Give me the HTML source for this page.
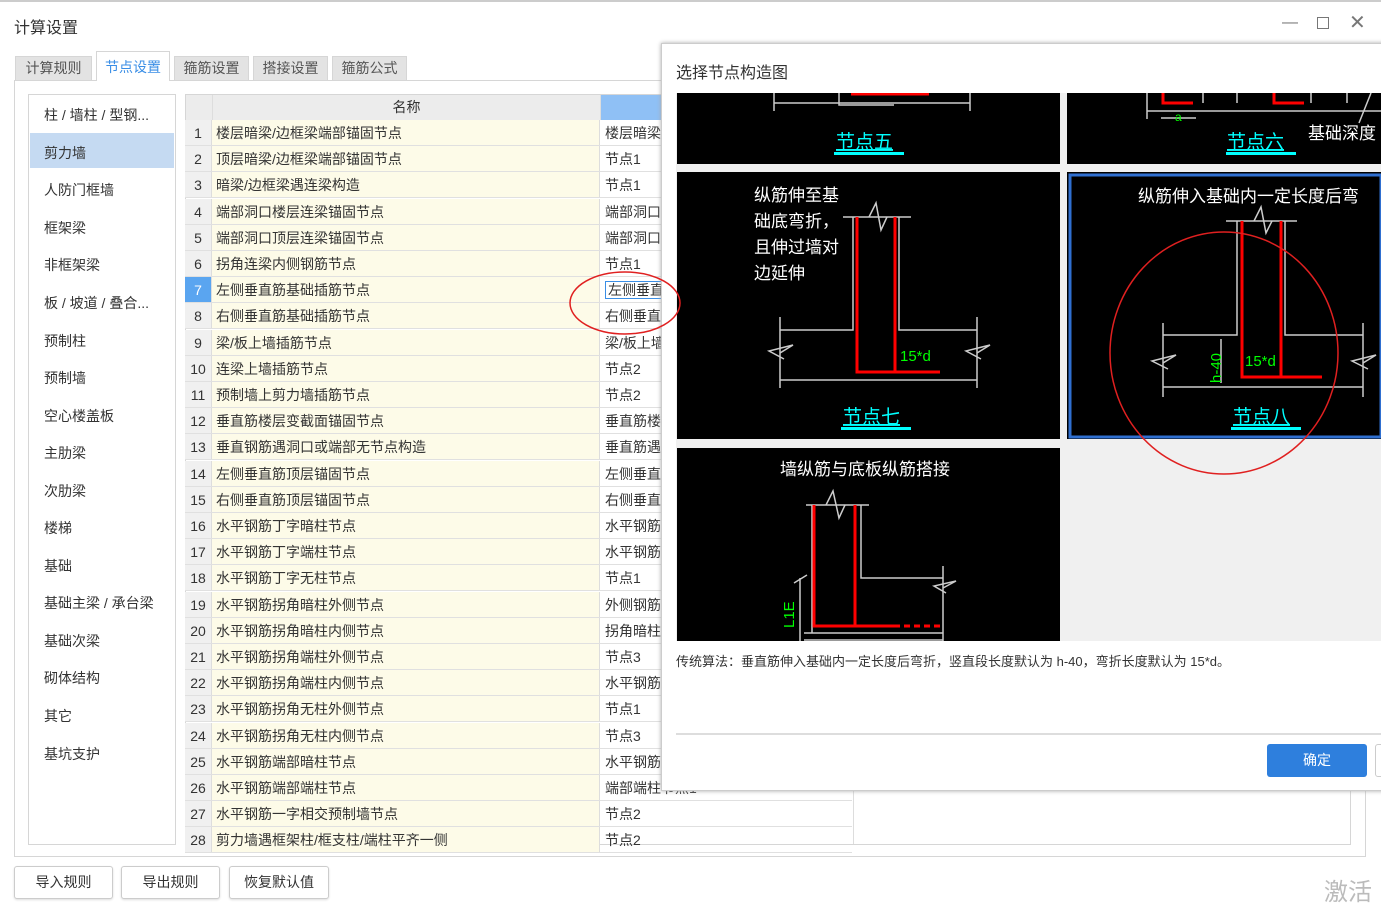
<!DOCTYPE html>
<html><head><meta charset="utf-8"><style>
*{margin:0;padding:0;box-sizing:border-box}
body{width:1381px;height:913px;position:relative;overflow:hidden;background:#fff;font-family:"Liberation Sans","Noto Sans CJK SC",sans-serif;color:#333;font-size:14px}
.a{position:absolute}
.tab{position:absolute;top:56px;height:24px;background:#e3e3e3;border:1px solid #d6d6d6;border-bottom:none;font-size:14px;color:#555;text-align:center;line-height:23px}
.li{position:absolute;left:44px;font-size:14px;color:#333}
.row{position:absolute;left:185px;width:667px;height:26px;border-bottom:1px solid #e0e0e0}
.row .n{position:absolute;left:0;width:27px;height:26px;background:#f0f0f0;text-align:center;line-height:26px;font-size:14px;border-right:1px solid #ddd}
.row .t{position:absolute;left:27px;width:388px;height:26px;background:#fdfbe8;line-height:26px;padding-left:4px;border-right:1px solid #ddd}
.row .v{position:absolute;left:416px;width:251px;height:26px;line-height:26px;padding-left:4px}
.btn{position:absolute;top:866px;height:33px;border:1px solid #ccc;border-radius:3px;background:#fff;text-align:center;line-height:31px;font-size:14px;box-shadow:0 1px 2px #ddd}
</style></head><body>
<div class="a" style="left:0;top:0;width:1381px;height:2px;background:#ccc"></div>
<div class="a" style="left:14px;top:14px;font-size:16px;color:#333">计算设置</div>
<div class="a" style="left:1282px;top:14px;color:#777;font-size:16px">—</div>
<div class="a" style="left:1317px;top:17px;width:12px;height:12px;border:1.5px solid #777"></div>
<div class="a" style="left:1349px;top:10px;color:#777;font-size:20px">✕</div>
<div class="tab" style="left:15px;width:77px">计算规则</div>
<div class="tab" style="left:96px;width:74px;top:51px;height:30px;background:#fff;color:#3a8ee6;line-height:30px;z-index:2">节点设置</div>
<div class="tab" style="left:174px;width:75px">箍筋设置</div>
<div class="tab" style="left:253px;width:75px">搭接设置</div>
<div class="tab" style="left:332px;width:75px">箍筋公式</div>
<div class="a" style="left:14px;top:80px;width:1352px;height:777px;border:1px solid #d6d6d6"></div>
<div class="a" style="left:28px;top:94px;width:148px;height:751px;border:1px solid #d6d6d6"></div>
<div class="a" style="left:30px;top:133px;width:144px;height:35px;background:#c5daf2"></div>
<div class="li" style="top:105px">柱 / 墙柱 / 型钢...</div>
<div class="li" style="top:143px">剪力墙</div>
<div class="li" style="top:180px">人防门框墙</div>
<div class="li" style="top:218px">框架梁</div>
<div class="li" style="top:255px">非框架梁</div>
<div class="li" style="top:293px">板 / 坡道 / 叠合...</div>
<div class="li" style="top:331px">预制柱</div>
<div class="li" style="top:368px">预制墙</div>
<div class="li" style="top:406px">空心楼盖板</div>
<div class="li" style="top:443px">主肋梁</div>
<div class="li" style="top:481px">次肋梁</div>
<div class="li" style="top:518px">楼梯</div>
<div class="li" style="top:556px">基础</div>
<div class="li" style="top:593px">基础主梁 / 承台梁</div>
<div class="li" style="top:631px">基础次梁</div>
<div class="li" style="top:668px">砌体结构</div>
<div class="li" style="top:706px">其它</div>
<div class="li" style="top:744px">基坑支护</div>
<div class="a" style="left:185px;top:94px;width:1166px;height:751px;border:1px solid #d6d6d6;overflow:hidden">
<div class="a" style="left:0;top:0;width:27px;height:25px;background:#ececec;border-right:1px solid #ddd"></div>
<div class="a" style="left:27px;top:0;width:388px;height:25px;background:#ececec;text-align:center;line-height:25px;border-right:1px solid #ddd">名称</div>
<div class="a" style="left:415px;top:0;width:252px;height:25px;background:#8fc0f5"></div>
<div class="a" style="left:667px;top:0;width:1px;height:751px;background:#ddd"></div>
</div>
<div id="rows"></div>
<script>
var t=["楼层暗梁/边框梁端部锚固节点","顶层暗梁/边框梁端部锚固节点","暗梁/边框梁遇连梁构造","端部洞口楼层连梁锚固节点","端部洞口顶层连梁锚固节点","拐角连梁内侧钢筋节点","左侧垂直筋基础插筋节点","右侧垂直筋基础插筋节点","梁/板上墙插筋节点","连梁上墙插筋节点","预制墙上剪力墙插筋节点","垂直筋楼层变截面锚固节点","垂直钢筋遇洞口或端部无节点构造","左侧垂直筋顶层锚固节点","右侧垂直筋顶层锚固节点","水平钢筋丁字暗柱节点","水平钢筋丁字端柱节点","水平钢筋丁字无柱节点","水平钢筋拐角暗柱外侧节点","水平钢筋拐角暗柱内侧节点","水平钢筋拐角端柱外侧节点","水平钢筋拐角端柱内侧节点","水平钢筋拐角无柱外侧节点","水平钢筋拐角无柱内侧节点","水平钢筋端部暗柱节点","水平钢筋端部端柱节点","水平钢筋一字相交预制墙节点","剪力墙遇框架柱/框支柱/端柱平齐一侧"];
var v=["楼层暗梁","节点1","节点1","端部洞口","端部洞口","节点1","左侧垂直","右侧垂直","梁/板上墙","节点2","节点2","垂直筋楼","垂直筋遇","左侧垂直","右侧垂直","水平钢筋","水平钢筋","节点1","外侧钢筋","拐角暗柱","节点3","水平钢筋","节点1","节点3","水平钢筋","端部端柱节点1","节点2","节点2"];
var h="";for(var i=0;i<28;i++){var y=120+i*26.2;var sel=i==6;var top=y+26>845?845-y:26;
h+='<div class="row" style="top:'+y+'px;height:'+top+'px;overflow:hidden"><div class="n" style="'+(sel?'background:#5aa5f0;color:#fff':'')+'">'+(i+1)+'</div><div class="t">'+t[i]+'</div><div class="v">'+(sel?'<span style="border:1px solid #3a8ee6;padding:0 2px">'+v[i]+'</span>':v[i])+'</div></div>';}
document.getElementById("rows").innerHTML=h;
</script>
<div class="btn" style="left:14px;width:99px">导入规则</div>
<div class="btn" style="left:121px;width:99px">导出规则</div>
<div class="btn" style="left:229px;width:100px">恢复默认值</div>
<div class="a" style="left:1324px;top:872px;font-size:24px;color:#bbb">激活</div>
<div class="a" style="left:661px;top:43px;width:730px;height:748px;background:#fff;border:1px solid #ccc;box-shadow:0 0 4px #aaa">
<div class="a" style="left:14px;top:15px;font-size:16px">选择节点构造图</div>
<div class="a" style="left:14px;top:50px;width:720px;height:1px;background:#ccc"></div>
<div class="a" style="left:14px;top:607px;font-size:13px;color:#333">传统算法：垂直筋伸入基础内一定长度后弯折，竖直段长度默认为 h-40，弯折长度默认为 15*d。</div>
<div class="a" style="left:14px;top:689px;width:720px;height:2px;background:#ddd"></div>
<div class="a" style="left:605px;top:700px;width:100px;height:33px;background:#2e7fdd;border-radius:3px;color:#fff;text-align:center;line-height:33px">确定</div>
<div class="a" style="left:713px;top:700px;width:20px;height:33px;border:1px solid #ccc;border-radius:3px"></div>
</div>
<svg class="a" style="left:676px;top:93px" width="705" height="548" font-family="Liberation Sans,Noto Sans CJK SC,sans-serif">
<rect x="0" y="0" width="705" height="548" fill="#f0f0f0"/>
<rect x="1" y="0" width="383" height="71" fill="#000"/>
<rect x="391" y="0" width="314" height="71" fill="#000"/>
<rect x="1" y="79" width="383" height="267" fill="#000"/>
<rect x="391" y="79" width="314" height="267" fill="#000"/>
<rect x="394" y="82" width="311" height="262" fill="none" stroke="#2f6fd0" stroke-width="3"/>
<rect x="1" y="355" width="383" height="193" fill="#000"/>
<g stroke="#ccc" fill="none" stroke-width="1.5">
<path d="M98 10H294M98 0V18M294 0V18M163 0V12H218"/>
<path d="M471 0V26M471 18H705M485 25H520M695 0L683 30M527 0V10M561 0V10M635 0V10M671 0V10"/>
<path d="M167 124H235M177 124V237H104M223 124V237H301M104 224V295M301 224V295M104 287H301"/>
<path d="M193 124L200 110L205 137L211 124M104 260L117 252L93 258L108 266M301 260L314 252L290 258L305 266"/>
<path d="M550 128H621M561 128V242H487M609 128V242H687M487 230V304M687 230V304M487 294H687"/>
<path d="M578 128L585 114L590 140L596 128M487 270L500 262L476 268L492 276M687 270L700 262L676 268L692 276M545 246V290"/>
<path d="M130 412H193M136 412V540M185 412V485H267M267 473V548M128 540H267M128 547H267M124 485V548M118 490L131 482"/>
<path d="M150 412L157 398L163 425L169 412M267 495L280 488L258 493L270 500"/>
</g>
<g stroke="red" stroke-width="3" fill="none">
<path d="M175 1H253"/>
<path d="M487 0V10H517M598 0V10H628"/>
<path d="M181 124V279H264M219 124V279"/>
<path d="M566 128V284H646M605 128V284"/>
<path d="M138 412V533H218M179 412V533"/>
<path d="M218 533H267" stroke-dasharray="6 4"/>
</g>
<g fill="#fff" font-size="17">
<text x="78" y="108">纵筋伸至基</text><text x="78" y="134">础底弯折，</text><text x="78" y="160">且伸过墙对</text><text x="78" y="186">边延伸</text>
<text x="462" y="109">纵筋伸入基础内一定长度后弯</text>
<text x="104" y="382">墙纵筋与底板纵筋搭接</text>
<text x="632" y="46">基础深度</text>
</g>
<g fill="#0f0" font-size="15"><text x="224" y="268">15*d</text><text x="569" y="273">15*d</text><text x="499" y="28" font-size="12">a</text>
<text x="545" y="290" transform="rotate(-90 545 290)">h-40</text><text x="118" y="535" transform="rotate(-90 118 535)">L1E</text></g>
<g fill="#0ff" font-size="19" text-decoration="underline">
<text x="160" y="55">节点五</text><text x="551" y="55">节点六</text><text x="167" y="330">节点七</text><text x="557" y="330">节点八</text></g>
<g fill="#0ff"><rect x="158" y="59" width="70" height="3"/><rect x="550" y="59" width="70" height="3"/><rect x="165" y="334" width="70" height="3"/><rect x="555" y="334" width="70" height="3"/></g>
</svg>
<svg class="a" style="left:0;top:0" width="1381" height="913">
<ellipse cx="625" cy="303" rx="55" ry="31" fill="none" stroke="#e02020" stroke-width="1.5"/>
<ellipse cx="1224" cy="353" rx="114" ry="121" fill="none" stroke="#e02020" stroke-width="1.5"/>
</svg>
</body></html>
